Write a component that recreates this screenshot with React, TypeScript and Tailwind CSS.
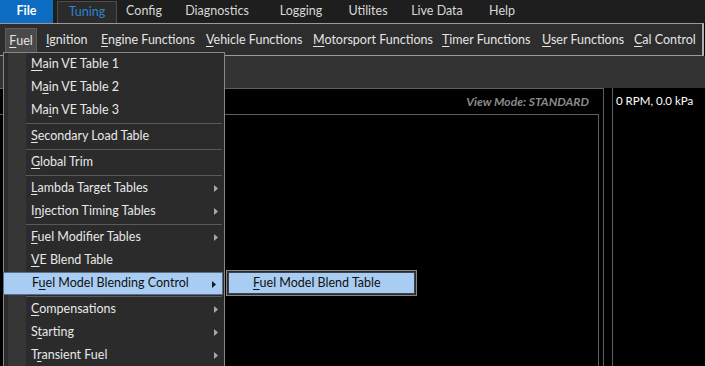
import React from "react";

const FONT = { fontFamily: 'Lato, "Noto Sans", sans-serif' };

type Item = { label: string; u: number; sub?: boolean; active?: boolean } | "sep";

const menuItems: Item[] = [
  { label: "Main VE Table 1", u: 0 },
  { label: "Main VE Table 2", u: 1 },
  { label: "Main VE Table 3", u: 2 },
  "sep",
  { label: "Secondary Load Table", u: 0 },
  "sep",
  { label: "Global Trim", u: 0 },
  "sep",
  { label: "Lambda Target Tables", u: 0, sub: true },
  { label: "Injection Timing Tables", u: 1, sub: true },
  "sep",
  { label: "Fuel Modifier Tables", u: 0, sub: true },
  { label: "VE Blend Table", u: 0 },
  { label: "Fuel Model Blending Control", u: 1, sub: true, active: true },
  "sep",
  { label: "Compensations", u: 0, sub: true },
  { label: "Starting", u: 1, sub: true },
  { label: "Transient Fuel", u: 1, sub: true },
];

function Accel({ label, u }: { label: string; u: number }) {
  return (
    <>
      {label.slice(0, u)}
      <span className="underline underline-offset-2">{label[u]}</span>
      {label.slice(u + 1)}
    </>
  );
}

function Arrow({ dark }: { dark?: boolean }) {
  return (
    <svg width="4" height="7" viewBox="0 0 4 7" className="absolute right-[6px] top-[8px]">
      <path d="M0 0 L4 3.5 L0 7 Z" fill={dark ? "#1a1a1a" : "#a8a8a8"} />
    </svg>
  );
}

const tabs = [
  { t: "Config", w: "w-[54px]" },
  { t: "Diagnostics", w: "w-[92px]" },
  { t: "Logging", w: "w-[76px]" },
  { t: "Utilites", w: "w-[58px]" },
  { t: "Live Data", w: "w-[80px]" },
  { t: "Help", w: "w-[50px]" },
];

const bar = [
  { t: "Ignition", w: "w-[55px]" },
  { t: "Engine Functions", w: "w-[105px]" },
  { t: "Vehicle Functions", w: "w-[107px]" },
  { t: "Motorsport Functions", w: "w-[129px]" },
  { t: "Timer Functions", w: "w-[100px]" },
  { t: "User Functions", w: "w-[92px]" },
  { t: "Cal Control", w: "w-[64px]" },
];

export default function App() {
  return (
    <div className="relative w-[705px] h-[366px] overflow-hidden bg-black flex flex-col" style={FONT}>
      {/* top ribbon tabs */}
      <div className="h-[23px] bg-[#1e1e1e] flex items-stretch text-[12.5px] text-[#d8d8d8]">
        <div className="w-[53px] bg-[#0b6cc2] text-white font-bold flex items-center justify-center">File</div>
        <div className="ml-[4px] w-[60px] mt-[1px] bg-[#2b2b2b] border border-b-0 border-[#4c4c4c] text-[#2f84cf] flex items-center justify-center">
          Tuning
        </div>
        {tabs.map((x) => (
          <div key={x.t} className={`${x.w} flex items-center justify-center`}>
            {x.t}
          </div>
        ))}
      </div>

      {/* menu bar */}
      <div className="h-[33px] bg-[#2d2d2d] border-t border-b border-[#9a9a9a] border-r-[2px] border-r-[#b0b0b0] mr-[1px] flex items-end text-[12.5px] text-[#e4e4e4]">
        <div className="ml-[5px] w-[32px] h-[27px] bg-[#4a4a4a] border border-b-0 border-[#5c5c5c] flex items-center justify-center pb-[2px]">
          <Accel label="Fuel" u={0} />
        </div>
        <div className="flex h-[27px] items-center pb-[2px] ml-[9px]">
          {bar.map((b) => (
            <span key={b.t} className={`${b.w} whitespace-nowrap`}>
              <Accel label={b.t} u={0} />
            </span>
          ))}
        </div>
      </div>

      {/* toolbar */}
      <div className="h-[32px] bg-[#333333]" />

      {/* content */}
      <div className="flex-1 flex">
        <div className="w-[604px] border-t border-r border-[#5e5e5e] flex flex-col">
          <div className="h-[25px] flex items-center justify-end pr-[14px]">
            <span className="italic font-bold text-[12px] text-[#8a8a8a]">View Mode: STANDARD</span>
          </div>
          <div className="flex-1 mr-[4px] border-t border-r border-[#5e5e5e]" />
        </div>
        <div className="ml-[8px] flex-1 border-l border-[#5e5e5e] pl-[3px] pt-[4px] text-[11.5px] text-white">
          0 RPM, 0.0 kPa
        </div>
      </div>

      {/* dropdown */}
      <div className="absolute left-[3px] top-[52px] w-[222px] h-[320px] bg-[#2b2b2b] border border-[#8c8585] flex text-[12.5px] text-[#e8e8e8]">
        <div className="w-[18px] bg-[#363636] ml-[4px]" />
        <div className="flex-1 flex flex-col">
          {menuItems.map((m, i) =>
            m === "sep" ? (
              <div key={i} className="h-[3px] flex items-center">
                <div className="h-px w-full mr-[2px] bg-[#5a5a5a]" />
              </div>
            ) : (
              <div
                key={i}
                className={
                  m.active
                    ? "relative h-[23px] -ml-[23px] mr-[1px] pl-[28px] flex items-center bg-[#a9cdf2] border border-[#5a6e86] text-[#111]"
                    : "relative h-[23px] pl-[5px] flex items-center"
                }
              >
                <span className="whitespace-nowrap">
                  <Accel label={m.label} u={m.u} />
                </span>
                {m.sub && <Arrow dark={m.active} />}
              </div>
            )
          )}
        </div>
      </div>

      {/* submenu */}
      <div className="absolute left-[226px] top-[270px] w-[191px] h-[26px] border border-[#8c8585] bg-[#2b2b2b] p-px">
        <div className="h-full bg-[#a9cdf2] border border-[#39424f] flex items-center pl-[24px] text-[12.5px] text-[#111]">
          <span className="whitespace-nowrap">
            <Accel label="Fuel Model Blend Table" u={0} />
          </span>
        </div>
      </div>
    </div>
  );
}
